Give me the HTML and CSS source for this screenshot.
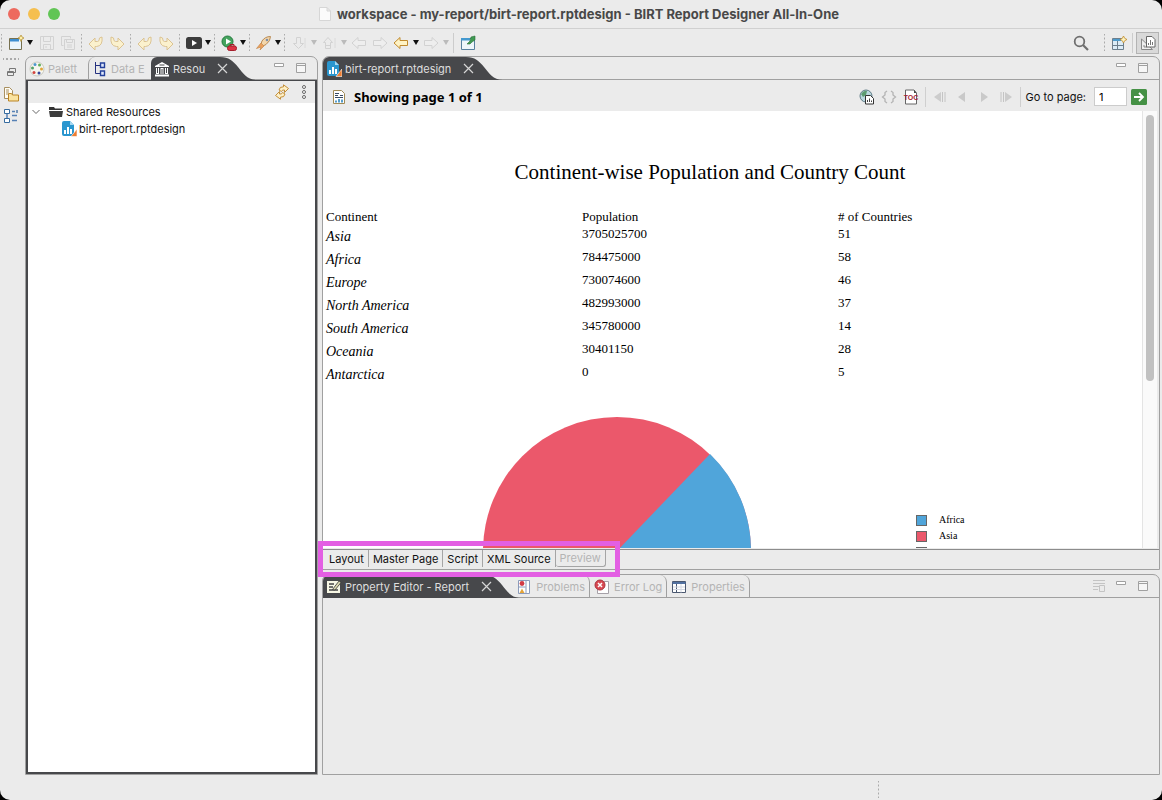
FILE: index.html
```html
<!DOCTYPE html>
<html lang="en">
  <head>
    <meta charset="UTF-8" />
    <meta name="viewport" content="width=device-width, initial-scale=1.0" />
    <title>workspace - my-report/birt-report.rptdesign</title>
    <link rel="stylesheet" href="styles.css">
  </head>
  <body>
    <!-- shared icons -->
    <svg class="sprite">
      <symbol id="caret" viewBox="0 0 6 5"><path d="M0 0H6L3 5Z" fill="currentColor"/></symbol>
      <symbol id="min" viewBox="0 0 16 16"><path d="M3.500 3.500h9v3h-9z" fill="#fff" stroke="#a0a0a0"/></symbol>
      <symbol id="max" viewBox="0 0 16 16"><path d="M3.500 3.500h9v9h-9zM3.500 5.500h9" fill="#f6f6f6" stroke="#a0a0a0"/></symbol>
      <symbol id="undo" viewBox="0 0 16 16"><path d="M1 9L7 3V6.500H9.500Q11.500 6.500 11.500 3L14 2Q15 11 8.500 11.500H7V15Z" fill="#fbf1cd" stroke="#dbc393"/></symbol>
      <symbol id="redo" viewBox="0 0 16 16"><path d="M15 9L9 3V6.500H6.500Q4.500 6.500 4.500 3L2 2Q1 11 7.500 11.500H9V15Z" fill="#fbf1cd" stroke="#dbc393"/></symbol>
      <symbol id="arrow" viewBox="0 0 16 16"><path d="M1 8L7 2.500V5.500H14.500V10.500H7V13.500Z" fill="var(--fill)" stroke="currentColor"/></symbol>
      <symbol id="chart-file" viewBox="0 0 16 16">
        <path d="M1 2Q1 0 3 0H9L13 4V15H3Q1 15 1 13Z" fill="#2a96cf"/>
        <path d="M9 0V4H13Z" fill="#a5d8f2"/>
        <path d="M3 9h2v4h-2zM6 6h2v7h-2zM9 8h2v5h-2z" fill="#fff"/>
        <path d="M10 15.500L16 8V15.500Z" fill="#ed7d31" stroke="#fff" stroke-width=".6"/>
      </symbol>
      <symbol id="tail" viewBox="0 0 42 23">
        <path d="M0 0H5C14 0 18 4 23 10S32 23 42 23H0Z" fill="#47484b"/>
        <path d="M3 7L12 16M12 7L3 16" stroke="#d6d6d6" stroke-width="1.200"/>
      </symbol>
    </svg>

    <div class="window">
      <header class="titlebar">
        <div class="lights">
          <button class="light red" aria-label="Close"></button>
          <button class="light yellow" aria-label="Minimize"></button>
          <button class="light green" aria-label="Zoom"></button>
        </div>
        <h1>
          <svg width="12" height="14" viewBox="0 0 12 14"><path d="M.5.5H8L11.500 4V13.500H.5ZM8 .5V4H11.500" fill="#fbfbfb" stroke="#d6d6d6"/></svg>
          workspace - my-report/birt-report.rptdesign - BIRT Report Designer All-In-One
        </h1>
      </header>

      <div class="toolbar">
        <span class="dots first"></span>
        <button class="tool" aria-label="New"><svg class="icon" viewBox="0 0 16 16"><path d="M1.500 3.500h12v11h-12z" fill="#eaf5fb" stroke="#77704f"/><path d="M2 4h9v2.500H2z" fill="#3d8ed0"/><path d="M13 0l1 2 2 1-2 1-1 2.500L12 4l-2-1 2-1z" fill="#fff0a8" stroke="#b08a2c" stroke-width=".7"/></svg></button>
        <button class="drop new" aria-label="New menu"><svg><use href="#caret"/></svg></button>
        <button class="tool off" aria-label="Save"><svg class="icon" viewBox="0 0 16 16"><path d="M1.500 1.500h13v13h-13zM4.500 1.500v5h7v-5M4.500 14.500v-5h7v5M7 11v2" fill="none" stroke="#d2d2d2"/></svg></button>
        <button class="tool off" aria-label="Save all"><svg class="icon" viewBox="0 0 16 16"><path d="M1.500 1.500h9v2M1.500 1.500v9h2M4.500 4.500h10v10h-10zM6.500 4.500v3h6v-3M7 10h5M7 12h5" fill="none" stroke="#d2d2d2"/></svg></button>
        <span class="dots"></span>
        <button class="tool" aria-label="Undo"><svg class="icon"><use href="#undo"/></svg></button>
        <button class="tool" aria-label="Redo"><svg class="icon"><use href="#redo"/></svg></button>
        <span class="dots"></span>
        <button class="tool" aria-label="Undo edit"><svg class="icon"><use href="#undo"/></svg></button>
        <button class="tool" aria-label="Redo edit"><svg class="icon"><use href="#redo"/></svg></button>
        <span class="dots"></span>
        <button class="tool" aria-label="View report"><svg class="icon" viewBox="0 0 16 16"><rect y="2" width="16" height="12" rx="2.500" fill="#3c3c3c"/><path d="M6 5L11 8L6 11Z" fill="#fff"/></svg></button>
        <button class="drop" aria-label="View report menu"><svg><use href="#caret"/></svg></button>
        <span class="dots"></span>
        <button class="tool" aria-label="Run"><svg class="icon" viewBox="0 0 16 16"><circle cx="6.500" cy="6.500" r="5.500" fill="#45a35e" stroke="#237a3d"/><path d="M5 3.500L10 6.500L5 9.500Z" fill="#fff"/><rect x="6.500" y="11" width="9" height="4.500" rx="2" fill="#dd3344" stroke="#a51d2b"/><path d="M9 11V9.500h4V11" fill="none" stroke="#a51d2b"/></svg></button>
        <button class="drop" aria-label="Run menu"><svg><use href="#caret"/></svg></button>
        <span class="dots"></span>
        <button class="tool" aria-label="External tools"><svg class="icon" viewBox="0 0 16 16"><path d="M6 6Q9 1.500 14.500 1.500Q14.500 6 10 9.500L7 11L5 9Z" fill="#f3d6ab" stroke="#b98b55"/><path d="M5 8L0.500 13.500L5 12L4 15L8 11Z" fill="#eca05c" stroke="#c58a4f" stroke-width=".7"/><circle cx="11" cy="5" r="1.300" fill="#7d8fa8"/></svg></button>
        <button class="drop" aria-label="External tools menu"><svg><use href="#caret"/></svg></button>
        <span class="dots"></span>
        <button class="tool off" aria-label="Next annotation"><svg class="icon" viewBox="0 0 16 16"><path d="M5.500 2.500h4v6h3L7.500 13.500L2.500 8.500h3z" fill="none" stroke="#d2d2d2"/><path d="M14 3v10" stroke="#dadada"/></svg></button>
        <button class="drop wide off" aria-label="Next annotation menu"><svg><use href="#caret"/></svg></button>
        <button class="tool off" aria-label="Previous annotation"><svg class="icon" viewBox="0 0 16 16"><path d="M4.500 13.500h5v-6h2L7 2.500L2.500 7.500h2zM4.500 10.500h5" fill="none" stroke="#d2d2d2"/><path d="M14 3v10" stroke="#dadada"/></svg></button>
        <button class="drop wide off" aria-label="Previous annotation menu"><svg><use href="#caret"/></svg></button>
        <button class="tool off" aria-label="Previous edit"><svg class="icon"><use href="#arrow"/></svg></button>
        <button class="tool off" aria-label="Next edit"><svg class="icon flip"><use href="#arrow"/></svg></button>
        <button class="tool back" aria-label="Back"><svg class="icon"><use href="#arrow"/></svg></button>
        <button class="drop wide" aria-label="Back menu"><svg><use href="#caret"/></svg></button>
        <button class="tool off" aria-label="Forward"><svg class="icon flip"><use href="#arrow"/></svg></button>
        <button class="drop wide off" aria-label="Forward menu"><svg><use href="#caret"/></svg></button>
        <span class="line"></span>
        <button class="tool" aria-label="Pin editor"><svg class="icon" viewBox="0 0 16 16"><path d="M1.500 3.500h13v11h-13z" fill="#eef6fb" stroke="#58809f"/><path d="M1 3h9v2.500H1z" fill="#4499cf"/><path d="M7 9l3-3 1-4 4-1v4l-3 2-2 2z" fill="#3f9a52" stroke="#2c6f3b" stroke-width=".6"/></svg></button>

        <button class="tool search" aria-label="Search"><svg class="icon" viewBox="0 0 16 16"><circle cx="6.500" cy="6.500" r="4.800" fill="none" stroke="#6f6f6f" stroke-width="1.800"/><path d="M10 10L15 15" stroke="#6f6f6f" stroke-width="2.200"/></svg></button>
        <span class="dots"></span>
        <button class="tool" aria-label="Open perspective"><svg class="icon" viewBox="0 0 16 16"><path d="M1.500 3.500h11v11h-11z" fill="#dcecf7" stroke="#6d7f8d"/><path d="M2 4h8v2H2z" fill="#4d9bcc"/><path d="M6.500 6v8M2 10.500h10" stroke="#6d7f8d"/><path d="M12.500 1l1.200 2.300L16 4.500l-2.300 1.200L12.500 8l-1.200-2.300L9 4.500l2.300-1.200z" fill="#fdf3c0" stroke="#c08b2c" stroke-width=".8"/></svg></button>
        <span class="line"></span>
        <button class="tool perspective" aria-label="Report Design"><svg class="icon" viewBox="0 0 16 16"><path d="M1.500 4v10.500h11zM4 10v2h3" fill="#eee" stroke="#888"/><path d="M6.500 1.500h5.500l3 3v7.500h-8.500z" fill="#fff" stroke="#666"/><path d="M8.500 10V8M10.500 10V5M12.500 10V7" stroke="#777"/></svg></button>
      </div>

      <div class="workbench">
        <aside class="trim">
          <span class="trim-dots"></span>
          <button class="tool" aria-label="Restore"><svg class="icon" viewBox="0 0 16 16"><path d="M6.500 6.500v-2h6v4h-2M4.500 7.500h6v4h-6zM4.500 8.500h6" fill="none" stroke="#777"/></svg></button>
          <button class="tool" aria-label="Navigator"><svg class="icon" viewBox="0 0 16 16"><path d="M1.500 1.500h5l3 3v8h-8zM3 4h3M3 6h3M3 8h2" fill="#fffdf5" stroke="#a99060"/><path d="M5.500 7.500h3l1 1.500h6v6h-10z" fill="#fae3a0" stroke="#bb8526"/></svg></button>
          <button class="tool" aria-label="Outline"><svg class="icon" viewBox="0 0 16 16"><path d="M1.500 1.500h5v4h-5zM1.500 10.500h5v4h-5z" fill="#fff" stroke="#356b9f"/><path d="M9 3.500h3M9 7.500h5M9 12.500h5M4 6v4" stroke="#5681b5" stroke-width="1.500"/><path d="M13 2h2v3h-2z" fill="#7897ba"/></svg></button>
        </aside>

        <section class="part resources">
          <div class="tabs">
            <button class="tab"><svg class="icon" viewBox="0 0 16 16"><circle cx="8" cy="8" r="7" fill="#f6f6ef" stroke="#c9c9c0"/><circle cx="6" cy="3.500" r="1.500" fill="#4d97ce"/><circle cx="10.500" cy="4" r="1.500" fill="#5fae57"/><circle cx="12.500" cy="8" r="1.500" fill="#e0a53a"/><circle cx="3.500" cy="7" r="1.500" fill="#52a065"/><circle cx="5" cy="11.500" r="1.500" fill="#d2443f"/><circle cx="10" cy="12" r="1.500" fill="#34469b"/></svg><span class="cut">Palett</span></button>
            <button class="tab"><svg class="icon" viewBox="0 0 16 16"><path d="M3.500 1V12.500H8M3.500 4.500H8" fill="none" stroke="#25317f"/><path d="M8.500 2h4v4.500h-4zM8.500 10h4v4.500h-4z" fill="#dfe8fb" stroke="#25419b" stroke-width="1.400"/></svg><span class="cut">Data E</span></button>
            <button class="tab active"><svg class="icon" viewBox="0 0 16 16"><path d="M1 5L8 1L15 5V6H1ZM2 7h3v6H2zM6.500 7h3v6h-3zM11 7h3v6h-3zM1 13.500h14V15.500H1z" fill="#fff"/><path d="M5.500 4h5M3.500 7v5M8 8v5M12.500 7v5" stroke="#47484b"/></svg>Resou</button>
            <button class="tail" aria-label="Close tab"><svg><use href="#tail"/></svg></button>
            <span class="spacer"></span>
            <button class="view-btn" aria-label="Minimize"><svg class="icon"><use href="#min"/></svg></button>
            <button class="view-btn" aria-label="Maximize"><svg class="icon"><use href="#max"/></svg></button>
          </div>
          <div class="resources-body">
            <div class="view-bar">
              <button class="view-btn" aria-label="Refresh"><svg class="icon" viewBox="0 0 16 16"><g fill="#fdf0c8" stroke="#bd8529" stroke-width=".9"><path d="M9.500 .8L14.500 4.500L10.500 8.500V6Q8 5.500 7.500 7.500L5 6Q5.500 2.500 9.500 2.800Z"/><path d="M6.500 15.200L1.500 11.500L5.500 7.500V10Q8 10.500 8.500 8.500L11 10Q10.500 13.500 6.500 13.200Z"/></g></svg></button>
              <button class="view-btn" aria-label="View menu"><svg class="icon" viewBox="0 0 16 16"><g fill="#fff" stroke="#666"><circle cx="8" cy="3" r="1.500"/><circle cx="8" cy="8" r="1.500"/><circle cx="8" cy="13" r="1.500"/></g></svg></button>
            </div>
            <ul class="tree">
              <li>
                <svg class="chevron" viewBox="0 0 8 6"><path d="M.5 1L4 4.500L7.500 1" fill="none" stroke="#666"/></svg>
                <svg class="folder" viewBox="0 0 14 12"><path d="M0 1H5L6 2.500H13V4H0Z" fill="#333"/><path d="M0 5H14L13 11H1Z" fill="#3c3c3c"/></svg>
                Shared Resources
              </li>
              <li class="child"><svg class="icon"><use href="#chart-file"/></svg>birt-report.rptdesign</li>
            </ul>
          </div>
        </section>

        <main class="main">
          <section class="part editor">
            <div class="tabs">
              <button class="tab active"><svg class="icon"><use href="#chart-file"/></svg>birt-report.rptdesign</button>
              <button class="tail" aria-label="Close tab"><svg><use href="#tail"/></svg></button>
              <span class="spacer"></span>
              <button class="view-btn" aria-label="Minimize"><svg class="icon"><use href="#min"/></svg></button>
              <button class="view-btn" aria-label="Maximize"><svg class="icon"><use href="#max"/></svg></button>
            </div>

            <div class="page-bar">
              <svg class="icon" viewBox="0 0 16 16"><path d="M2.500 1.500h8l3 3v10h-11z" fill="#fff" stroke="#a08a55"/><path d="M4 4.500h4M4 6.500h3M9 6.500h3M4 8.500h8" stroke="#394b63"/><path d="M5 13.500v-2M8 13.500V10M11 13.500v-3" stroke="#2d86bd" stroke-width="1.600"/></svg>
              <h2>Showing page 1 of 1</h2>
              <button class="page-btn" aria-label="Open in browser"><svg class="icon" viewBox="0 0 16 16"><circle cx="7" cy="7" r="6" fill="#b9d7df" stroke="#5e7a85"/><path d="M2 5Q5 1 8 2L7 6L4 8ZM8 8l3-2 1 3z" fill="#5b9b70"/><path d="M6.500 6.500h5l3 3v5.500h-8z" fill="#fff" stroke="#333"/><path d="M8.500 13v-2M10.500 13V9.500M12.500 13v-1.500" stroke="#444"/></svg></button>
              <button class="page-btn off" aria-label="Source"><svg class="icon" viewBox="0 0 16 16"><path d="M6 2L4 3.500V6L1.500 8L4 10V12.500L6 14M10 2L12 3.500V6L14.500 8L12 10V12.500L10 14" fill="none" stroke="#b4b4b4" stroke-width="1.300"/></svg></button>
              <button class="page-btn toc" aria-label="Table of contents"><svg class="icon" viewBox="0 0 16 16"><path d="M2.500 1H11l2.500 3v11h-11z" fill="#fff" stroke="#666"/><path d="M11 1v3h2.500z" fill="#444"/><text x="8" y="11" class="toc-text">TOC</text></svg></button>
              <span class="rule"></span>
              <button class="page-btn off" aria-label="First page"><svg class="icon" viewBox="0 0 16 16"><path d="M9 3V13L2 8Z" fill="#ccc"/><path d="M10.500 3v10M13 3v10" stroke="#c4c4c4"/></svg></button>
              <button class="page-btn off" aria-label="Previous page"><svg class="icon" viewBox="0 0 16 16"><path d="M11 3V13L4 8Z" fill="#c9c9c9"/></svg></button>
              <button class="page-btn off" aria-label="Next page"><svg class="icon" viewBox="0 0 16 16"><path d="M5 3V13L12 8Z" fill="#c9c9c9"/></svg></button>
              <button class="page-btn off" aria-label="Last page"><svg class="icon" viewBox="0 0 16 16"><path d="M7 3V13L14 8Z" fill="#ccc"/><path d="M3 3v10M5.500 3v10" stroke="#c4c4c4"/></svg></button>
              <span class="rule"></span>
              <label for="page">Go to page:</label>
              <input id="page" type="text" value="1" />
              <button class="go" aria-label="Go"><svg class="icon" viewBox="0 0 16 16"><rect width="16" height="16" rx="1.500" fill="#459145"/><path d="M3 8H12M8 4L12 8L8 12" fill="none" stroke="#fff" stroke-width="1.800"/></svg></button>
            </div>

            <div class="preview">
              <div class="report">
                <h3>Continent-wise Population and Country Count</h3>
                <table>
                  <thead>
                    <tr><th>Continent</th><th>Population</th><th># of Countries</th></tr>
                  </thead>
                  <tbody>
                    <tr><td class="name">Asia</td><td>3705025700</td><td>51</td></tr>
                    <tr><td class="name">Africa</td><td>784475000</td><td>58</td></tr>
                    <tr><td class="name">Europe</td><td>730074600</td><td>46</td></tr>
                    <tr><td class="name">North America</td><td>482993000</td><td>37</td></tr>
                    <tr><td class="name">South America</td><td>345780000</td><td>14</td></tr>
                    <tr><td class="name">Oceania</td><td>30401150</td><td>28</td></tr>
                    <tr><td class="name">Antarctica</td><td>0</td><td>5</td></tr>
                  </tbody>
                </table>
                <div class="chart">
                  <svg class="pie" width="268" height="268" viewBox="-134 -134 268 268">
                    <circle r="134" fill="#eb586b"/>
                    <path d="M0 0L93 -97A134 134 0 0 1 134 0Z" fill="#50a5da"/>
                  </svg>
                  <ul class="legend">
                    <li><i class="swatch blue"></i>Africa</li>
                    <li><i class="swatch pink"></i>Asia</li>
                    <li><i class="swatch"></i></li>
                  </ul>
                </div>
              </div>
              <div class="scrollbar"><div class="thumb"></div></div>
            </div>

            <div class="pages">
              <button>Layout</button>
              <button>Master Page</button>
              <button>Script</button>
              <button>XML Source</button>
              <button class="current">Preview</button>
              <div class="highlight"></div>
            </div>
          </section>

          <section class="part properties">
            <div class="tabs">
              <button class="tab active"><svg class="icon" viewBox="0 0 16 16"><path d="M1 2h13v12H1z" fill="#f7f7e4"/><path d="M3 5h5M3 8h4M3 11h8M10 11h2" stroke="#444" stroke-width="1.300"/><path d="M6.500 10.500L13 2L15 3.500L9 11Z" fill="#dcd9b0" stroke="#333" stroke-width=".8"/></svg>Property Editor - Report</button>
              <button class="tail" aria-label="Close tab"><svg><use href="#tail"/></svg></button>
              <button class="tab after"><svg class="icon" viewBox="0 0 16 16"><path d="M2.500 1.500h11v13h-11zM2.500 8h7" fill="#fff" stroke="#8b9bbb"/><circle cx="6" cy="4.500" r="2.400" fill="#d23b46"/><path d="M6 9.500L8.500 14H3.500Z" fill="#e4a43a"/><path d="M10 2v12" stroke="#8b9bbb"/></svg>Problems</button>
              <button class="tab"><svg class="icon" viewBox="0 0 16 16"><path d="M5.500 2.500h9v12h-11v-4" fill="#fff" stroke="#a6a1a8"/><circle cx="6" cy="6" r="5" fill="#d84851" stroke="#a8343e"/><path d="M4 4L8 8M8 4L4 8" stroke="#fff" stroke-width="1.500"/></svg>Error Log</button>
              <button class="tab"><svg class="icon" viewBox="0 0 16 16"><path d="M1.500 2.500h13v11h-13z" fill="#fff" stroke="#4b5870"/><path d="M1.500 3h13v2h-13z" fill="#5170a0"/><path d="M5.500 5v8.500" stroke="#4b5870"/><path d="M10 5v8.500M2 8h12M2 10.500h12" stroke="#d3d8e2"/></svg>Properties</button>
              <span class="spacer"></span>
              <button class="view-btn" aria-label="New view"><svg class="icon" viewBox="0 0 16 16"><path d="M2 2.500h12M2 5.500h12M2 8.500h6M2 11.500h5M8.500 7.500h5v6h-5z" fill="none" stroke="#c4c4c4"/></svg></button>
              <button class="view-btn" aria-label="Minimize"><svg class="icon"><use href="#min"/></svg></button>
              <button class="view-btn" aria-label="Maximize"><svg class="icon"><use href="#max"/></svg></button>
            </div>
          </section>
        </main>
      </div>

      <footer class="status"><span class="dots"></span></footer>
    </div>
  </body>
</html>
```

FILE: styles.css
```css
* {
  box-sizing: border-box;
}

body {
  margin: 0;
  background: #000;
  font-family: Inter, "Liberation Sans", sans-serif;
  font-size: 11px;
  color: #111;
}

button {
  margin: 0;
  padding: 0;
  border: none;
  background: none;
  font: inherit;
  color: inherit;
}

svg {
  display: block;
  flex: none;
}

.sprite {
  display: none;
}

.icon {
  width: 16px;
  height: 16px;
}

.flip {
  transform: scaleX(-1);
}

.spacer {
  flex: 1;
}

.window {
  display: flex;
  flex-direction: column;
  height: 100vh;
  background: #ebebeb;
  border-radius: 10px;
  overflow: hidden;
}

/* title bar */
.titlebar {
  display: flex;
  align-items: center;
  height: 29px;
  flex: none;
  border-bottom: 1px solid #d0d0d0;
  padding: 0 8px;
}

.lights {
  display: flex;
  gap: 8px;
  width: 52px;
}

.light {
  width: 12px;
  height: 12px;
  border-radius: 50%;
}

.red {
  background: #ed6a5f;
}

.yellow {
  background: #f5bf4f;
}

.green {
  background: #61c555;
}

h1 {
  display: flex;
  align-items: center;
  justify-content: center;
  gap: 6px;
  flex: 1;
  margin: 0 56px 0 0;
  font-size: 13px;
  font-weight: 700;
  color: #484848;
  white-space: nowrap;
}

/* main toolbar */
.toolbar {
  display: flex;
  align-items: center;
  height: 27px;
  flex: none;
  padding-right: 3px;
}

.tool {
  display: flex;
  align-items: center;
  justify-content: center;
  width: 21px;
  height: 22px;
  flex: none;
}

.drop {
  display: flex;
  justify-content: center;
  width: 7px;
  flex: none;
  color: #111;
}

.drop svg {
  width: 6px;
  height: 5px;
}

.drop.wide {
  width: 9px;
}

.drop.new {
  margin-right: 3px;
}

.off {
  --fill: #eee;
  color: #d2d2d2;
}

.drop.off {
  color: #bbb;
}

.back {
  --fill: #fff3c4;
  color: #c08a2e;
}

.dots {
  width: 7px;
  height: 17px;
  flex: none;
  background: radial-gradient(circle, #aaa 1px, transparent 1px) center / 7px 4px repeat-y;
}

.dots.first {
  margin-left: -2px;
}

.line {
  width: 7px;
  height: 20px;
  flex: none;
  background: linear-gradient(#ccc, #ccc) center / 1px 100% no-repeat;
}

.search {
  margin: 0 10px 0 auto;
}

.perspective {
  width: 23px;
  border: 1px solid #b3b3b3;
  background: #d9d9d9;
}

/* workbench */
.workbench {
  display: flex;
  flex: 1;
  min-height: 0;
  padding-right: 2px;
}

.trim {
  display: flex;
  flex-direction: column;
  align-items: center;
  width: 25px;
  flex: none;
  padding: 1px 4px 0 0;
}

.trim-dots {
  width: 16px;
  height: 4px;
  background: radial-gradient(circle, #aaa 1px, transparent 1px) center / 4px 4px repeat-x;
}

.part {
  display: flex;
  flex-direction: column;
  border: 1px solid #a0a0a0;
  border-radius: 7px 7px 0 0;
  min-width: 0;
}

.tabs {
  display: flex;
  height: 23px;
  flex: none;
  border-bottom: 1px solid #a0a0a0;
  padding-right: 5px;
}

.tab {
  display: flex;
  align-items: center;
  gap: 4px;
  height: 23px;
  padding: 0 4px;
  color: #b4b4b4;
  border-right: 1px solid #a0a0a0;
  border-radius: 0 7px 0 0;
  white-space: nowrap;
}

.tab.active {
  gap: 3px;
  padding: 0 10px 0 3px;
  border: none;
  border-radius: 6px 0 0 0;
  background: #47484b;
  color: #dedede;
}

.tab.after {
  margin-left: -9px;
}

.tail svg {
  width: 42px;
  height: 23px;
}

.view-btn {
  display: flex;
  justify-content: center;
  width: 22px;
}

.view-btn svg {
  margin-top: 3px;
}

.resources {
  width: 293px;
  flex: none;
  margin-right: 4px;
}

.resources .tab:not(.active) {
  gap: 3px;
  border-right: none;
  padding: 0 3px;
}

.resources .tab + .tab:not(.active) {
  border-left: 1px solid #a0a0a0;
  border-radius: 7px 0 0 0;
}

.cut {
  width: 37px;
  overflow: hidden;
  text-align: left;
}

.resources-body {
  flex: 1;
  border: 2px solid #47484b;
  border-top-width: 1px;
  background: #fff;
}

.view-bar {
  display: flex;
  justify-content: flex-end;
  height: 22px;
  background: #ebebeb;
}

.tree {
  list-style: none;
  margin: 0;
  padding: 0 0 0 4px;
}

.tree li {
  display: flex;
  align-items: center;
  height: 17px;
}

.chevron {
  width: 8px;
  height: 6px;
  margin-right: 9px;
}

.folder {
  width: 14px;
  height: 12px;
  margin-right: 3px;
}

.tree .child {
  gap: 2px;
  padding-left: 29px;
}

/* editor */
.main {
  display: flex;
  flex-direction: column;
  flex: 1;
  gap: 4px;
  min-width: 0;
}

.editor {
  flex: 1;
  min-height: 0;
}

.page-bar {
  display: flex;
  align-items: center;
  height: 31px;
  flex: none;
  padding: 2px 12px 0 8px;
}

h2 {
  flex: 1;
  margin: 0 0 0 7px;
  font: bold 13px/18px "Lucida Grande", "Noto Sans", sans-serif;
  color: #000;
}

.page-btn {
  display: flex;
  justify-content: center;
  width: 22px;
  flex: none;
}

.toc-text {
  font: bold 7px "Liberation Sans", sans-serif;
  fill: #a51c30;
  text-anchor: middle;
}

.rule {
  width: 1px;
  height: 20px;
  margin: 0 3px;
  background: #cfcfcf;
}

.page-bar label {
  margin: 0 8px 0 2px;
}

.page-bar input {
  width: 33px;
  height: 19px;
  margin-right: 4px;
  padding: 0 4px;
  border: 1px solid #ccc;
  background: #fff;
  font: inherit;
}

.preview {
  display: flex;
  flex: 1;
  min-height: 0;
  overflow: hidden;
  background: #fff;
  margin-right: 2px;
}

.report {
  flex: 1;
  padding: 48px 0 0 3px;
  font: 13px/17px "Liberation Serif", serif;
  color: #000;
}

h3 {
  width: 768px;
  margin: 0 0 24px;
  font-size: 21px;
  font-weight: normal;
  line-height: 26px;
  text-align: center;
}

table {
  width: 768px;
  table-layout: fixed;
  border-collapse: collapse;
}

th,
td {
  padding: 0;
  font-weight: normal;
  text-align: left;
  vertical-align: top;
}

th {
  line-height: 16px;
}

.name {
  font: italic 14px/23px "Apple Chancery", "Liberation Serif", serif;
}

.chart {
  display: flex;
  width: 768px;
  padding: 31px 0 0 157px;
}

.legend {
  list-style: none;
  margin: 95px 0 0 165px;
  padding: 0;
  font-size: 10px;
  line-height: 16px;
}

.legend li {
  display: flex;
  align-items: center;
  gap: 12px;
  height: 16px;
}

.swatch {
  width: 11px;
  height: 11px;
  border: 1px solid #666;
}

.blue {
  background: #50a5da;
}

.pink {
  background: #eb586b;
}

.scrollbar {
  width: 15px;
  flex: none;
  padding: 4px 3px;
  border-left: 1px solid #e4e4e4;
  background: #fafafa;
}

.thumb {
  width: 8px;
  height: 62%;
  border-radius: 4px;
  background: #c1c1c1;
}

.pages {
  position: relative;
  display: flex;
  height: 20px;
  flex: none;
  margin-top: 1px;
  border-top: 1px solid #8c8c8c;
  padding: 0 2px 2px;
}

.pages button {
  padding: 0 4px;
  border-right: 1px solid #a5a5a5;
}

.pages .current {
  border: 1px solid #a5a5a5;
  border-top: none;
  border-left: none;
  border-radius: 0 0 3px 3px;
  color: #b4b4b4;
}

.highlight {
  position: absolute;
  left: -5px;
  top: -9px;
  width: 302px;
  height: 36px;
  border: 5px solid #e35fe3;
  z-index: 1;
}

.properties {
  height: 201px;
  flex: none;
}

.status {
  height: 25px;
  flex: none;
  padding: 6px 0 0 75%;
}

.status .dots {
  display: block;
  margin-left: 3px;
}
```
